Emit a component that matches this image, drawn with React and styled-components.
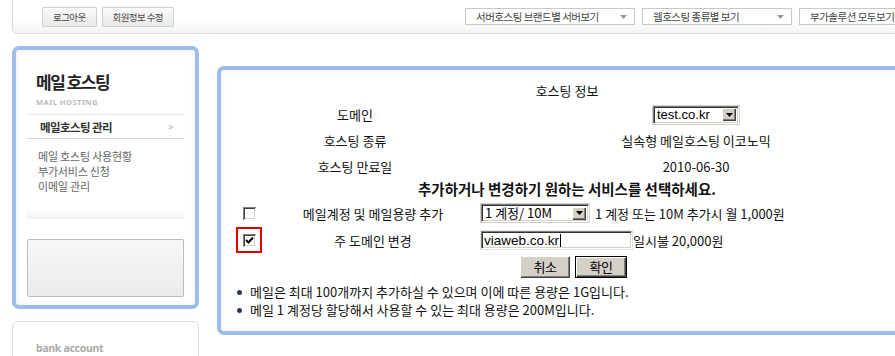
import React from 'react';
import styled, { createGlobalStyle } from 'styled-components';

const GlobalStyle = createGlobalStyle`
  html, body {
    margin: 0;
    padding: 0;
    overflow: hidden;
    background: #fff;
  }
  body {
    font-family: "Noto Sans CJK KR", "Noto Sans", sans-serif;
    color: #222;
  }
`;

const ArrowDown = ({ color = '#000', w = 7, h = 4 }) => (
  <svg width={w} height={h} viewBox="0 0 7 4">
    <path d="M0 0 H7 L3.5 4 Z" fill={color} />
  </svg>
);

const CheckMark = () => (
  <svg width="9" height="9" viewBox="0 0 9 9">
    <path d="M1 4 L3.5 6.5 L8 1.5" stroke="#000" strokeWidth="2" fill="none" />
  </svg>
);

const App = () => {
  return (
    <Page>
      <GlobalStyle />

      <TopBar>
        <ButtonGroup>
          <TopButton>로그아웃</TopButton>
          <TopButton>회원정보 수정</TopButton>
        </ButtonGroup>
        <MenuGroup>
          <TopSelect $width={170}>
            서버호스팅 브랜드별 서버보기
            <ArrowDown color="#999" />
          </TopSelect>
          <TopSelect $width={150}>
            웹호스팅 종류별 보기
            <ArrowDown color="#999" />
          </TopSelect>
          <TopSelect $width={150}>
            부가솔루션 모두보기
            <ArrowDown color="#999" />
          </TopSelect>
        </MenuGroup>
      </TopBar>

      <Body>
        <SideColumn>
          <SideBox>
            <SideTitle>메일 호스팅</SideTitle>
            <SideSubTitle>MAIL HOSTING</SideSubTitle>
            <MenuTitle>
              메일호스팅 관리
              <MenuArrow>&gt;</MenuArrow>
            </MenuTitle>
            <MenuList>
              <MenuItem>메일 호스팅 사용현황</MenuItem>
              <MenuItem>부가서비스 신청</MenuItem>
              <MenuItem>이메일 관리</MenuItem>
            </MenuList>
            <FadeBand />
            <BannerBox />
          </SideBox>

          <BankBox>
            <BankLabel>bank account</BankLabel>
            <BankTitle>무통장입금계좌안내</BankTitle>
          </BankBox>
        </SideColumn>

        <MainPanel>
          <InfoGrid>
            <InfoTitle>호스팅 정보</InfoTitle>
            <Cell>도메인</Cell>
            <Cell>
              <ClassicSelect $width={86}>
                <SelectValue>test.co.kr</SelectValue>
                <SelectArrow><ArrowDown /></SelectArrow>
              </ClassicSelect>
            </Cell>
            <Cell $h={26}>호스팅 종류</Cell>
            <Cell $h={26}>실속형 메일호스팅 이코노믹</Cell>
            <Cell $h={26}>호스팅 만료일</Cell>
            <Cell $h={26}>2010-06-30</Cell>
          </InfoGrid>

          <Notice>추가하거나 변경하기 원하는 서비스를 선택하세요.</Notice>

          <OptionGrid>
            <CheckCell>
              <CheckFrame>
                <Checkbox />
              </CheckFrame>
            </CheckCell>
            <OptionLabel>메일계정 및 메일용량 추가</OptionLabel>
            <ControlCell $gap={6}>
              <ClassicSelect $width={108}>
                <SelectValue $cjk>1 계정/ 10M</SelectValue>
                <SelectArrow><ArrowDown /></SelectArrow>
              </ClassicSelect>
              1 계정 또는 10M 추가시 월 1,000원
            </ControlCell>

            <CheckCell>
              <CheckFrame $marked>
                <Checkbox><CheckMark /></Checkbox>
              </CheckFrame>
            </CheckCell>
            <OptionLabel>주 도메인 변경</OptionLabel>
            <ControlCell $gap={1}>
              <ClassicInput>
                viaweb.co.kr<Caret />
              </ClassicInput>
              일시불 20,000원
            </ControlCell>
          </OptionGrid>

          <ButtonRow>
            <ClassicButton>취소</ClassicButton>
            <ClassicButton $isDefault>확인</ClassicButton>
          </ButtonRow>

          <NoteList>
            <NoteItem>메일은 최대 100개까지 추가하실 수 있으며 이에 따른 용량은 1G입니다.</NoteItem>
            <NoteItem>메일 1 계정당 할당해서 사용할 수 있는 최대 용량은 200M입니다.</NoteItem>
          </NoteList>
        </MainPanel>
      </Body>
    </Page>
  );
};

const Page = styled.div`
  width: 960px;
`;

// 상단 바
const TopBar = styled.div`
  box-sizing: border-box;
  width: 948px;
  height: 34px;
  margin-left: 12px;
  padding: 0 10px 0 29px;
  display: flex;
  align-items: center;
  justify-content: space-between;
  border: 1px solid #dcdcdc;
  border-top: none;
  border-bottom-left-radius: 5px;
  background: linear-gradient(to bottom, #fff 55%, #f4f4f4);
`;

const ButtonGroup = styled.div`
  display: flex;
  gap: 5px;
`;

const TopButton = styled.button`
  height: 20px;
  padding: 0 10px;
  margin: 0;
  border: 1px solid #cfcfcf;
  border-radius: 1px;
  background: linear-gradient(to bottom, #fafafa, #e9e9e9);
  font-family: "Noto Sans CJK KR", sans-serif;
  font-size: 9.5px;
  letter-spacing: -0.6px;
  color: #444;
  line-height: 18px;
`;

const MenuGroup = styled.div`
  display: flex;
  gap: 7px;
`;

const TopSelect = styled.div`
  box-sizing: border-box;
  width: ${p => p.$width}px;
  height: 17px;
  padding: 0 7px 0 10px;
  display: flex;
  align-items: center;
  justify-content: space-between;
  border: 1px solid #c8c8c8;
  background: #fff;
  font-size: 10.5px;
  letter-spacing: -0.5px;
  color: #444;
  white-space: nowrap;
`;

const Body = styled.div`
  display: flex;
  align-items: flex-start;
  gap: 18px;
  padding: 12px 0 0 12px;
`;

// 왼쪽 사이드
const SideColumn = styled.div`
  width: 187px;
  display: flex;
  flex-direction: column;
  gap: 12px;
  flex-shrink: 0;
`;

const SideBox = styled.div`
  box-sizing: border-box;
  width: 187px;
  padding: 22px 11px 8px;
  border: 4px solid #9fbbe7;
  border-radius: 7px;
  background: #fff;
  box-shadow: inset 0 0 6px rgba(0, 0, 0, 0.08);
  display: flex;
  flex-direction: column;
`;

const SideTitle = styled.div`
  padding-left: 9px;
  font-size: 17px;
  font-weight: 700;
  letter-spacing: -1.5px;
  line-height: 20px;
  color: #222;
`;

const SideSubTitle = styled.div`
  margin-top: 5px;
  padding-left: 9px;
  font-family: "Noto Sans", sans-serif;
  font-size: 7.5px;
  font-weight: 700;
  letter-spacing: 0.5px;
  line-height: 10px;
  color: #bbb;
`;

const MenuTitle = styled.div`
  margin-top: 7px;
  height: 25px;
  box-sizing: border-box;
  padding: 0 11px 0 13px;
  display: flex;
  align-items: center;
  justify-content: space-between;
  border-top: 1px solid #ececec;
  border-bottom: 1px solid #d4d4d4;
  font-size: 11.5px;
  font-weight: 700;
  letter-spacing: -0.6px;
  color: #333;
`;

const MenuArrow = styled.span`
  font-weight: 400;
  font-size: 10px;
  color: #aaa;
`;

const MenuList = styled.div`
  margin-top: 10px;
  padding-left: 11px;
  display: flex;
  flex-direction: column;
`;

const MenuItem = styled.div`
  font-size: 11px;
  line-height: 15px;
  letter-spacing: -0.2px;
  color: #666;
`;

const FadeBand = styled.div`
  margin-top: 15px;
  height: 10px;
  background: linear-gradient(to bottom, #fff, #f1f1f1);
`;

const BannerBox = styled.div`
  margin-top: 20px;
  height: 58px;
  box-sizing: border-box;
  border: 1px solid #bdbdbd;
  border-radius: 2px;
  background: linear-gradient(to bottom, #f7f7f7, #ebebeb);
`;

const BankBox = styled.div`
  box-sizing: border-box;
  width: 187px;
  padding: 19px 23px 10px;
  border: 1px solid #dedede;
  border-radius: 6px;
`;

const BankLabel = styled.div`
  font-family: "Noto Sans", sans-serif;
  font-size: 10.5px;
  font-weight: 700;
  line-height: 14px;
  letter-spacing: -0.3px;
  color: #aaa;
`;

const BankTitle = styled.div`
  font-size: 14px;
  font-weight: 700;
  line-height: 18px;
  color: #333;
`;

// 메인 패널
const MainPanel = styled.div`
  box-sizing: border-box;
  width: 700px;
  margin-top: 20px;
  padding: 8px 5px 12px;
  border: 4px solid #9fbbe7;
  border-radius: 7px;
  background: #fff;
  box-shadow: inset 0 0 6px rgba(0, 0, 0, 0.08);
  font-size: 13px;
  color: #111;
  flex-shrink: 0;
`;

const InfoGrid = styled.div`
  display: grid;
  grid-template-columns: 258px 1fr;
`;

const InfoTitle = styled.div`
  grid-column: 1 / 3;
  height: 24px;
  display: flex;
  align-items: center;
  justify-content: center;
`;

const Cell = styled.div`
  height: ${p => p.$h || 25}px;
  display: flex;
  align-items: center;
  justify-content: center;
`;

const Notice = styled.div`
  height: 18px;
  display: flex;
  align-items: center;
  justify-content: center;
  font-size: 14.5px;
  font-weight: 700;
  color: #111;
`;

const ClassicSelect = styled.div`
  box-sizing: border-box;
  width: ${p => p.$width}px;
  height: 18px;
  display: flex;
  align-items: center;
  justify-content: space-between;
  background: #fff;
  border-top: 1px solid #808080;
  border-left: 1px solid #808080;
  border-right: 1px solid #fff;
  border-bottom: 1px solid #fff;
  box-shadow: inset 1px 1px 0 #303030, inset -1px -1px 0 #d4d0c8, 0 0 0 1px #d4d0c8;
  padding: 2px 2px 2px 3px;
`;

const SelectValue = styled.span`
  font-family: ${p => (p.$cjk ? '"Noto Sans CJK KR", sans-serif' : '"Liberation Sans", Arial, sans-serif')};
  font-size: 13px;
  line-height: 14px;
  color: #000;
  white-space: nowrap;
`;

const SelectArrow = styled.span`
  box-sizing: border-box;
  width: 14px;
  height: 13px;
  display: flex;
  align-items: center;
  justify-content: center;
  background: #d4d0c8;
  box-shadow: inset 1px 1px 0 #fff, inset -1px -1px 0 #404040, inset -2px -2px 0 #808080;
`;

const OptionGrid = styled.div`
  margin-top: 3px;
  display: grid;
  grid-template-columns: 46px 202px 1fr;
  grid-auto-rows: 26px;
  row-gap: 1px;
  align-items: center;
`;

const CheckCell = styled.div`
  display: flex;
  justify-content: center;
  align-items: center;
`;

const CheckFrame = styled.span`
  box-sizing: border-box;
  width: 26px;
  height: 26px;
  display: flex;
  align-items: center;
  justify-content: center;
  border: 2px solid ${p => (p.$marked ? '#e50000' : 'transparent')};
`;

const Checkbox = styled.span`
  box-sizing: border-box;
  width: 13px;
  height: 13px;
  display: flex;
  align-items: center;
  justify-content: center;
  background: #fff;
  box-shadow: inset 1px 1px 0 #808080, inset -1px -1px 0 #fff, inset 2px 2px 0 #404040, inset -2px -2px 0 #d4d0c8;
`;

const OptionLabel = styled.div`
  text-align: center;
  white-space: nowrap;
`;

const ControlCell = styled.div`
  padding-left: 7px;
  display: flex;
  align-items: center;
  gap: ${p => p.$gap}px;
  white-space: nowrap;
`;

const ClassicInput = styled.div`
  box-sizing: border-box;
  width: 151px;
  height: 18px;
  padding: 0 2px;
  display: flex;
  align-items: center;
  background: #fff;
  border-top: 1px solid #808080;
  border-left: 1px solid #808080;
  border-right: 1px solid #fff;
  border-bottom: 1px solid #fff;
  box-shadow: inset 1px 1px 0 #303030, inset -1px -1px 0 #d4d0c8, 0 0 0 1px #e6e3dc;
  font-family: "Liberation Sans", Arial, sans-serif;
  font-size: 13.5px;
  color: #000;
`;

const Caret = styled.span`
  width: 1px;
  height: 13px;
  margin-left: 1px;
  background: #000;
`;

const ButtonRow = styled.div`
  margin-top: 3px;
  padding-left: 13px;
  display: flex;
  justify-content: center;
  gap: 5px;
`;

const ClassicButton = styled.button`
  box-sizing: border-box;
  width: ${p => (p.$isDefault ? 52 : 50)}px;
  height: 22px;
  margin: 0;
  padding: 0;
  border: ${p => (p.$isDefault ? '1px solid #000' : 'none')};
  background: #d4d0c8;
  box-shadow: inset 1px 1px 0 #fff, inset -1px -1px 0 #404040, inset -2px -2px 0 #808080;
  font-family: "Noto Sans CJK KR", sans-serif;
  font-size: 13px;
  letter-spacing: -0.5px;
  color: #000;
  line-height: 18px;
`;

const NoteList = styled.ul`
  margin: 5px 0 0;
  padding: 0 0 0 11px;
  list-style: none;
`;

const NoteItem = styled.li`
  display: flex;
  align-items: center;
  gap: 8px;
  line-height: 18px;
  font-size: 13px;
  color: #111;

  &::before {
    content: '';
    width: 5px;
    height: 5px;
    border-radius: 50%;
    background: #2e3852;
    flex-shrink: 0;
  }
`;

export default App;
